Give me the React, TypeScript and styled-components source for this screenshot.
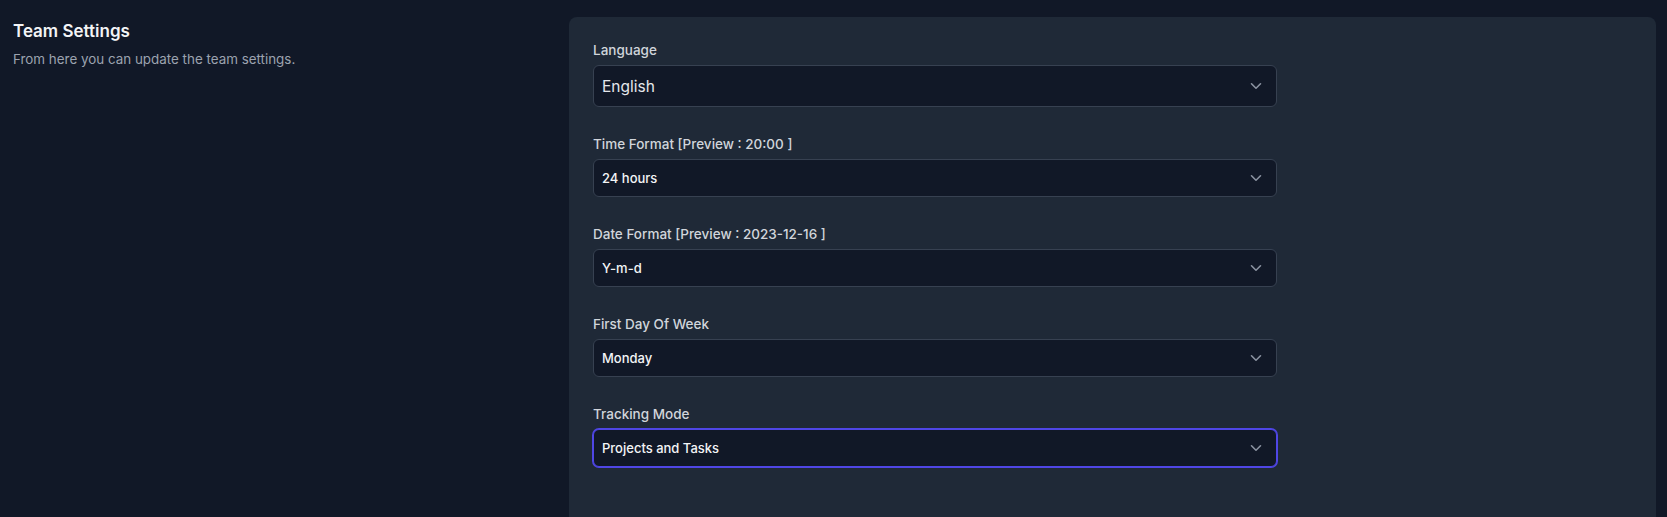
import styled, { createGlobalStyle } from 'styled-components';

const GlobalStyle = createGlobalStyle`
  html, body {
    margin: 0;
    padding: 0;
    background-color: #111827;
    font-family: Inter, 'Noto Sans', sans-serif;
  }
`;

const Page = styled.div`
  display: flex;
  align-items: flex-start;
  min-height: 100vh;
  box-sizing: border-box;
  padding: 17px 11px 0 13px;
  background-color: #111827;
  overflow: hidden;
`;

const Intro = styled.div`
  width: 556px;
  flex-shrink: 0;
  padding-top: 2px;
`;

const Title = styled.h2`
  margin: 0;
  font-size: 17px;
  line-height: 24px;
  font-weight: 600;
  color: #f3f4f6;
`;

const Subtitle = styled.p`
  margin: 6px 0 0;
  font-size: 13.4px;
  line-height: 20px;
  color: #9ca3af;
`;

const Card = styled.div`
  flex: 1;
  min-height: calc(100vh - 17px);
  box-sizing: border-box;
  padding: 23px 24px;
  background-color: #1f2937;
  border-radius: 8px 8px 0 0;
`;

const Field = styled.div`
  width: 684px;
  margin-bottom: 27px;
`;

const Label = styled.label`
  display: block;
  margin-bottom: 5px;
  font-size: 13.5px;
  line-height: 20px;
  font-weight: 500;
  color: #d1d5db;
`;

const SelectBox = styled.div<{ $large?: boolean; $focused?: boolean }>`
  display: flex;
  align-items: center;
  justify-content: space-between;
  height: ${(p) => (p.$large ? '42px' : '38px')};
  box-sizing: border-box;
  padding: 0 14px 0 8px;
  background-color: #111827;
  border: 1px solid ${(p) => (p.$focused ? '#4f46e5' : '#374151')};
  box-shadow: ${(p) => (p.$focused ? '0 0 0 1px #4f46e5' : 'none')};
  border-radius: 6px;
  color: ${(p) => (p.$large ? '#e5e7eb' : '#f3f4f6')};
  font-size: ${(p) => (p.$large ? '15.5px' : '13px')};
  font-weight: ${(p) => (p.$large ? 400 : 500)};
  cursor: pointer;
`;

const Chevron = () => (
  <svg width="12" height="8" viewBox="0 0 12 8" fill="none" stroke="#8b93a1" strokeWidth="1.6" strokeLinecap="round" strokeLinejoin="round">
    <path d="M1.5 1.8 6 6.2l4.5-4.4" />
  </svg>
);

const fields = [
  { label: 'Language', value: 'English', large: true },
  { label: 'Time Format [Preview : 20:00 ]', value: '24 hours' },
  { label: 'Date Format [Preview : 2023-12-16 ]', value: 'Y-m-d' },
  { label: 'First Day Of Week', value: 'Monday' },
  { label: 'Tracking Mode', value: 'Projects and Tasks', focused: true },
];

export default function App() {
  return (
    <>
      <GlobalStyle />
      <Page>
        <Intro>
          <Title>Team Settings</Title>
          <Subtitle>From here you can update the team settings.</Subtitle>
        </Intro>
        <Card>
          {fields.map((f) => (
            <Field key={f.label}>
              <Label>{f.label}</Label>
              <SelectBox $large={f.large} $focused={f.focused}>
                <span>{f.value}</span>
                <Chevron />
              </SelectBox>
            </Field>
          ))}
        </Card>
      </Page>
    </>
  );
}
